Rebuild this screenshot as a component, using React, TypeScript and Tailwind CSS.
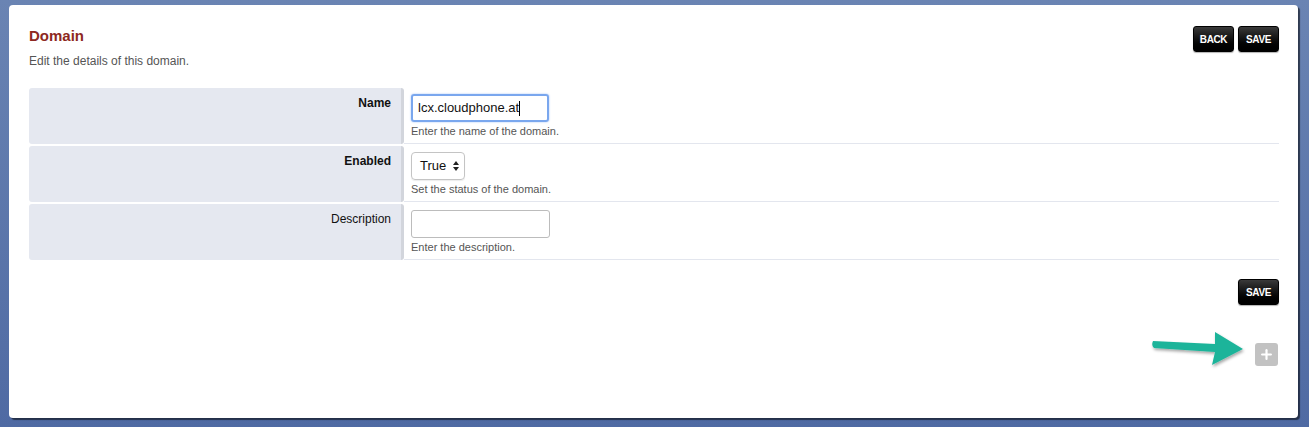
import { Plus } from 'lucide-react';

const rows = [
  { label: 'Name', bold: true, kind: 'focused', help: 'Enter the name of the domain.' },
  { label: 'Enabled', bold: true, kind: 'select', help: 'Set the status of the domain.' },
  { label: 'Description', bold: false, kind: 'input', help: 'Enter the description.' },
];

function BlackButton({ label }: { label: string }) {
  return (
    <button className="h-[26px] w-[41px] rounded-[3px] border border-[#000] bg-gradient-to-b from-[#3a3a3a] via-[#111] to-[#000] text-white text-[10px] font-bold tracking-[-0.4px] shadow-[0_1px_1px_rgba(0,0,0,0.3)]">
      {label}
    </button>
  );
}

function Arrow() {
  return (
    <svg width="104" height="40" viewBox="0 0 104 40" className="mr-[2px] mt-[-6px]">
      <defs>
        <filter id="sh" x="-10%" y="-20%" width="130%" height="160%">
          <feDropShadow dx="1" dy="2" stdDeviation="1.5" floodColor="#000" floodOpacity="0.35" />
        </filter>
      </defs>
      <path
        d="M4 10 Q2 14 5 17 L66 21 L63 34 L94 18 L66 1 L66 13 Z"
        fill="#1db49a"
        filter="url(#sh)"
        strokeLinejoin="round"
      />
    </svg>
  );
}

export default function App() {
  return (
    <div
      className="w-[1309px] h-[427px] pt-[5px] pl-[9px] pr-[11px] bg-gradient-to-b from-[#6a84b3] to-[#4f6aa3]"
      style={{ fontFamily: '"Liberation Sans", Arial, sans-serif' }}
    >
      <div className="h-[413px] bg-white rounded-[4px] pt-[21px] pl-[20px] pr-[19px] shadow-[2px_2px_1px_rgba(0,0,0,0.55)]">
        {/* header */}
        <div className="flex justify-between items-start">
          <div>
            <h1 className="text-[15px] leading-[20px] font-bold text-[#8d2821]">Domain</h1>
            <p className="mt-[7px] text-[12px] leading-[16px] text-[#555]">Edit the details of this domain.</p>
          </div>
          <div className="flex gap-[4px]">
            <BlackButton label="BACK" />
            <BlackButton label="SAVE" />
          </div>
        </div>

        {/* form table */}
        <div className="mt-[19px] flex flex-col gap-[2px]">
          {rows.map((r) => (
            <div key={r.label} className="flex h-[56px]">
              <div className="w-[375px] shrink-0 bg-[#e5e8f0] rounded-[3px] border-r-[3px] border-[#d2d5dc] pt-[2px] pr-[10px] text-right">
                <span className={`text-[12px] leading-[16px] text-[#111] ${r.bold ? 'font-bold' : ''}`}>{r.label}</span>
              </div>
              <div className="flex-1 border-b border-[#e3e6ee] pl-[7px] pt-[6px]">
                {r.kind === 'focused' && (
                  <div className="w-[138px] h-[28px] rounded-[3px] border-[2px] border-[#7aa7ee] shadow-[0_0_2px_#9bbdf5] flex items-center pl-[5px] text-[13px] text-[#111]">
                    lcx.cloudphone.at<span className="inline-block w-[1px] h-[15px] bg-black" />
                  </div>
                )}
                {r.kind === 'select' && (
                  <div className="w-[54px] h-[28px] rounded-[4px] border border-[#c4c4c4] flex items-center justify-between pl-[8px] pr-[5px] text-[13px] text-[#111] shadow-[0_1px_1px_rgba(0,0,0,0.08)]">
                    True
                    <svg width="6" height="10" viewBox="0 0 6 10">
                      <path d="M3 0 L6 4 L0 4 Z M3 10 L6 6 L0 6 Z" fill="#222" />
                    </svg>
                  </div>
                )}
                {r.kind === 'input' && (
                  <div className="w-[139px] h-[28px] rounded-[3px] border border-[#bcbcbc]" />
                )}
                <p className="mt-[2px] text-[11px] leading-[14px] text-[#555]">{r.help}</p>
              </div>
            </div>
          ))}
        </div>

        <div className="mt-[19px] flex justify-end">
          <BlackButton label="SAVE" />
        </div>

        <div className="mt-[32px] flex justify-end items-center pr-[1px]">
          <Arrow />
          <div className="w-[23px] h-[23px] rounded-[3px] bg-[#c2c2c2] flex items-center justify-center">
            <Plus size={15} strokeWidth={3.5} className="text-white" />
          </div>
        </div>
      </div>
    </div>
  );
}
